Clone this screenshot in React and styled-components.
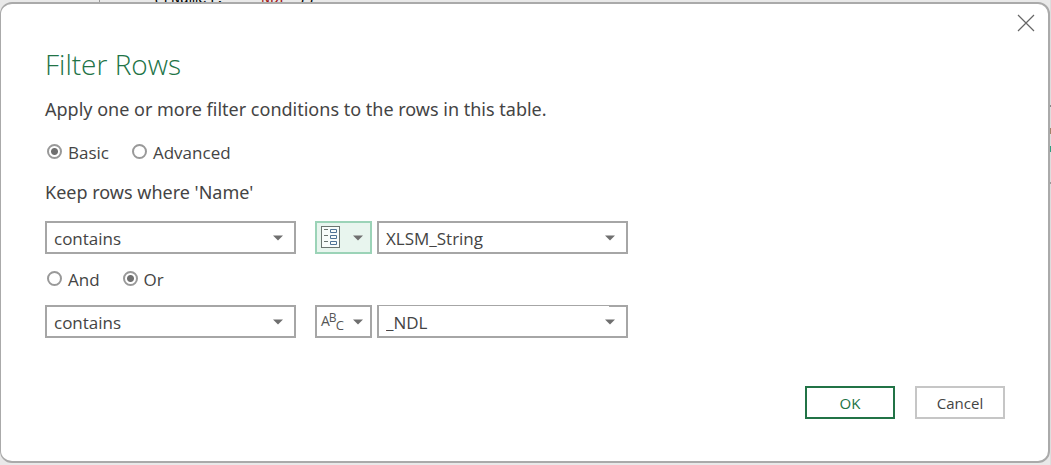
import { useState } from "react";
import styled, { createGlobalStyle } from "styled-components";


function Caret() {
  return (
    <CaretSvg width="10" height="6" viewBox="0 0 10 6" aria-hidden="true">
      <path d="M0 0.5h10L5 5.5z" fill="#6f6f6f" />
    </CaretSvg>
  );
}

function ParameterIcon() {
  return (
    <svg width="20" height="23" viewBox="0 0 20 23" fill="none" aria-hidden="true">
      <rect x="0.5" y="0.5" width="18" height="21" fill="#f8fcfa" stroke="#6b7570" />
      <path d="M3 3.5h4M3 9.5h4M3 15.5h4" stroke="#6b7570" />
      <path d="M9.5 3.5h6v3h-6zM9.5 9.5h6v3h-6zM9.5 15.5h6v3h-6z" stroke="#4f7295" />
    </svg>
  );
}

function SelectBox({ label, value, options, onChange }) {
  return (
    <Field>
      <Select aria-label={label} value={value} onChange={(e) => onChange(e.target.value)}>
        {options.map((option) => (
          <option key={option}>{option}</option>
        ))}
      </Select>
      <Caret />
    </Field>
  );
}

function RadioOption({ name, label, current, onChange }) {
  return (
    <RadioLabel>
      <Radio type="radio" name={name} checked={current === label} onChange={() => onChange(label)} />
      {label}
    </RadioLabel>
  );
}

function App() {

  let [mode, setMode] = useState("Basic");
  let [join, setJoin] = useState("Or");
  let [first, setFirst] = useState("contains");
  let [second, setSecond] = useState("contains");
  let [parameter, setParameter] = useState("XLSM_String");
  let [text, setText] = useState("_NDL");

  const operators = ["contains", "does not contain", "equals", "begins with"];

  return (
    <Page>
      <GlobalStyle />
      <CodeStrip aria-hidden="true">
        ([Name],{"  "}<CodeString>"_NDL"</CodeString>))
      </CodeStrip>
      <Dialog role="dialog" aria-labelledby="dialog-title">
        <TitleBar>
          <CloseButton type="button" aria-label="Close">
            <svg width="18" height="18" viewBox="0 0 18 18" stroke="#666" strokeWidth="1.2" aria-hidden="true">
              <path d="M1 1l16 16M17 1L1 17" />
            </svg>
          </CloseButton>
        </TitleBar>
        <Form onSubmit={(e) => e.preventDefault()}>
          <Title id="dialog-title">Filter Rows</Title>
          <Lead>Apply one or more filter conditions to the rows in this table.</Lead>
          <RadioRow role="radiogroup" aria-label="Mode">
            <RadioOption name="mode" label="Basic" current={mode} onChange={setMode} />
            <RadioOption name="mode" label="Advanced" current={mode} onChange={setMode} />
          </RadioRow>
          <SectionLabel>Keep rows where 'Name'</SectionLabel>
          <ConditionRow>
            <SelectBox label="First operator" value={first} options={operators} onChange={setFirst} />
            <ValueGroup>
              <TypeButton type="button" $active aria-haspopup="menu" aria-label="Parameter">
                <ParameterIcon />
                <Caret />
              </TypeButton>
              <SelectBox label="First value" value={parameter} options={["XLSM_String"]} onChange={setParameter} />
            </ValueGroup>
          </ConditionRow>
          <RadioRow role="radiogroup" aria-label="Join">
            <RadioOption name="join" label="And" current={join} onChange={setJoin} />
            <RadioOption name="join" label="Or" current={join} onChange={setJoin} />
          </RadioRow>
          <ConditionRow>
            <SelectBox label="Second operator" value={second} options={operators} onChange={setSecond} />
            <ValueGroup>
              <TypeButton type="button" aria-haspopup="menu">
                <TextType>A<sup>B</sup><sub>C</sub></TextType>
                <Caret />
              </TypeButton>
              <Field>
                <TextInput aria-label="Second value" value={text} onChange={(e) => setText(e.target.value)} />
                <Caret />
              </Field>
            </ValueGroup>
          </ConditionRow>
          <Actions>
            <Button type="submit" $primary>OK</Button>
            <Button type="button">Cancel</Button>
          </Actions>
        </Form>
      </Dialog>
    </Page>
  );
}

export default App;

const GlobalStyle = createGlobalStyle`
  * {
    box-sizing: border-box;
  }
  body {
    margin: 0;
    background: #e9e9e9;
    color: #444;
    font-family: "Open Sans", "Noto Sans", sans-serif;
    font-size: 17px;
  }
  button, input, select {
    font: inherit;
    color: inherit;
  }
`;

/* the sheet behind the dialog shows as a thin edge on the right */
const Page = styled.div`
  display: flex;
  flex-direction: column;
  min-height: 100vh;
  padding: 0 1px 2px 0;
  background: linear-gradient(
    #ddd 105px, #888 105px 107px, #ddd 107px 128px, #a08468 128px 134px,
    #ddd 134px 146px, #2f9e80 146px 152px, #ddd 152px 182px, #999 182px 184px, #ddd 184px
  ) right / 1px 100% no-repeat;
`;

const CodeStrip = styled.div`
  display: flex;
  align-items: flex-end;
  height: 2px;
  margin-left: 99px;
  padding-left: 53px;
  border-left: 1px solid #999;
  color: #000;
  font: 15px/4px "Liberation Mono", monospace;
  white-space: pre;
`;

const CodeString = styled.span`
  color: #a31515;
`;

const Dialog = styled.section`
  position: relative;
  display: flex;
  flex-direction: column;
  flex: 1;
  border: 2px solid #aaa;
  border-left-width: 1px;
  border-radius: 12px;
  background: #fff;
`;

const TitleBar = styled.header`
  display: flex;
  justify-content: flex-end;
  padding: 10px 13px 0;
`;

const CloseButton = styled.button`
  display: flex;
  padding: 0;
  border: 0;
  background: none;
`;

const Form = styled.form`
  display: flex;
  flex-direction: column;
  flex: 1;
  padding: 12px 43px 42px 44px;
`;

const Title = styled.h1`
  margin: 0 0 11px;
  color: #217346;
  font-size: 28px;
  font-weight: 300;
  line-height: 40px;
`;

const Lead = styled.p`
  margin: 0 0 4px;
  font-family: "Noto Sans", "Open Sans", sans-serif;
  font-size: 18px;
  line-height: 28px;
`;

const SectionLabel = styled(Lead)`
  margin-bottom: 15px;
`;

const RadioRow = styled.div`
  display: flex;
  gap: 21px;
  padding: 12px 0 11px;
  line-height: 28px;
`;

const RadioLabel = styled.label`
  display: flex;
  gap: 6px;
`;

const Radio = styled.input`
  appearance: none;
  width: 15px;
  height: 15px;
  margin: 5px 0 0 2px;
  border: 2px solid #999;
  border-radius: 50%;
  background: ${(props) => (props.checked ? "radial-gradient(circle, #707070 3px, #fff 4px)" : "#fff")};
`;

const ConditionRow = styled.div`
  display: flex;
  gap: 19px;
`;

const ValueGroup = styled.div`
  display: flex;
  gap: 5px;
`;

const Field = styled.div`
  display: grid;
  align-items: center;
  width: 251px;
  height: 33px;
  border: 2px solid #a6a6a6;
  > * {
    grid-area: 1 / 1;
  }
  > svg {
    justify-self: end;
    margin-right: 11px;
  }
`;

const CaretSvg = styled.svg`
  pointer-events: none;
`;

const Select = styled.select`
  appearance: none;
  width: 100%;
  height: 100%;
  padding: 2px 30px 0 7px;
  border: 0;
  background: none;
`;

/* the white box overlaps the top border of its field, up to the arrow */
const TextInput = styled.input`
  align-self: end;
  width: calc(100% - 17px);
  height: 30px;
  margin-top: -1px;
  padding: 3px 13px 0 7px;
  border: 0;
  background: #fff;
`;

const TypeButton = styled.button`
  display: flex;
  align-items: center;
  justify-content: space-between;
  width: 57px;
  height: 33px;
  padding: 0 7px 0 4px;
  border: 2px solid ${(props) => (props.$active ? "#9bd3b7" : "#a6a6a6")};
  background: ${(props) => (props.$active ? "#e8f5ee" : "#fff")};
`;

const TextType = styled.span`
  padding-bottom: 2px;
  color: #555;
  font-size: 14px;
  font-weight: 500;
  line-height: 20px;
  sup, sub {
    margin-left: -1px;
    font-size: 12px;
    line-height: 0;
  }
  sup {
    vertical-align: 4px;
  }
  sub {
    font-size: 13px;
    vertical-align: -4px;
  }
`;

const Actions = styled.footer`
  display: flex;
  justify-content: flex-end;
  gap: 20px;
  margin-top: auto;
`;

const Button = styled.button`
  width: 90px;
  height: 33px;
  padding: 0;
  border: 2px solid ${(props) => (props.$primary ? "#217346" : "#c6c6c6")};
  background: #fff;
  color: ${(props) => (props.$primary ? "#217346" : "#444")};
  font-size: 15px;
`;
